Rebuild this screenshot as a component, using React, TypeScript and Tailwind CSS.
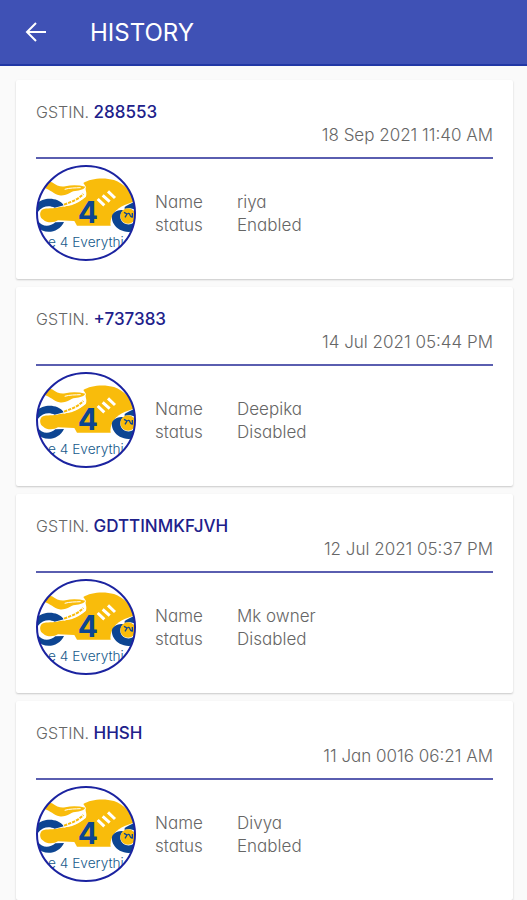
type Entry = { gstin: string; date: string; name: string; status: string };

const entries: Entry[] = [
  { gstin: '288553', date: '18 Sep 2021 11:40 AM', name: 'riya', status: 'Enabled' },
  { gstin: '+737383', date: '14 Jul 2021 05:44 PM', name: 'Deepika', status: 'Disabled' },
  { gstin: 'GDTTINMKFJVH', date: '12 Jul 2021 05:37 PM', name: 'Mk owner', status: 'Disabled' },
  { gstin: 'HHSH', date: '11 Jan 0016 06:21 AM', name: 'Divya', status: 'Enabled' },
];

function BikeLogo({ id }: { id: string }) {
  return (
    <svg className="h-24 w-[100px] shrink-0" viewBox="30 30 300 288" role="img" aria-label="Bike 4 Everything">
      <defs>
        <clipPath id={id}>
          <ellipse cx="180" cy="174" rx="147" ry="141" />
        </clipPath>
      </defs>
      <ellipse cx="180" cy="174" rx="147" ry="141" fill="#fff" />
      <g clipPath={`url(#${id})`}>
        {/* rear wheel */}
        <path d="M30 150 C44 128 92 122 114 151 L86 158 C70 150 50 152 36 170 Z" fill="#0d4592" />
        <path d="M36 198 C48 216 72 216 88 202 L114 201 C98 236 48 242 30 208 Z" fill="#0d4592" />
        {/* seat */}
        <path d="M60 78 L78 82 C92 92 104 97 118 94 C138 89 158 90 178 95 C172 106 156 106 142 109 C130 114 118 124 100 121 C84 117 74 104 52 98 Z" fill="#f9bc0b" />
        <path d="M116 103 C132 98 148 99 164 98" stroke="#fff" strokeWidth="3" fill="none" />
        {/* tank and body */}
        <path d="M172 84 C192 70 234 66 264 75 C294 86 316 108 327 140 L327 212 L153 212 L145 198 L96 196 C84 204 62 204 52 194 C40 188 40 170 48 164 C62 158 84 162 98 157 L136 151 C152 146 164 138 180 124 C184 112 176 104 180 96 Z" fill="#f9bc0b" />
        <path d="M112 149 C132 144 155 138 176 120" stroke="#fff" strokeWidth="13" fill="none" />
        <path d="M114 149 C135 141 154 135 172 117" stroke="#f9bc0b" strokeWidth="6" strokeDasharray="10 3" fill="none" />
        {/* tank vents */}
        <path d="M215 132 L235 151 M230 121 L251 140 M246 109 L267 129" stroke="#fff" strokeWidth="9" />
        {/* front wheel */}
        <path d="M254 212 C250 186 268 162 296 150 L330 138 L330 240 L258 222 Z" fill="#fff" />
        <path d="M296 156 C306 150 314 145 327 141 L330 166 C320 160 308 158 296 162 Z" fill="#0d4592" />
        <path d="M258 182 C262 172 278 162 292 166 C280 176 280 194 292 203 C304 212 318 208 330 200 L330 226 C304 238 274 226 264 208 C258 198 257 190 258 182 Z" fill="#0d4592" />
        <circle cx="306" cy="183" r="23" fill="#f9bc0b" />
        <path d="M294 172 L303 177 L297 187 M305 176 C315 172 309 188 319 186 L319 174" stroke="#0d4592" strokeWidth="4" fill="none" />
        <text x="155" y="205" fontSize="90" fontWeight="700" fill="#0d4592">4</text>
        <text x="66" y="277" fontSize="41" fontWeight="300" fill="#165a8c">e 4 Everythi</text>
      </g>
      <ellipse cx="180" cy="174" rx="147" ry="141" fill="none" stroke="#1b23a0" strokeWidth="6" />
    </svg>
  );
}

function HistoryCard({ entry, id }: { entry: Entry; id: string }) {
  return (
    <article className="rounded-xs bg-white px-5 pt-5 pb-[18px] shadow-[0_1px_2px_rgba(0,0,0,0.2)]">
      <h2 className="text-base leading-6">
        GSTIN. <span className="text-[17px] font-medium text-[#20208a]">{entry.gstin}</span>
      </h2>
      <p className="text-right leading-[23px]">{entry.date}</p>
      <hr className="mt-2.5 mb-1.5 border-0 border-t-2 border-[#5a5eb0]" />
      <div className="flex items-center gap-[19px]">
        <BikeLogo id={id} />
        <dl className="grid grid-cols-[82px_1fr] pt-0.5 leading-[23px]">
          <dt>Name</dt>
          <dd>{entry.name}</dd>
          <dt>status</dt>
          <dd>{entry.status}</dd>
        </dl>
      </div>
    </article>
  );
}

export default function App() {
  return (
    <div className="min-h-screen bg-[#fafafa] font-['Inter','Liberation_Sans',sans-serif] text-[17px] font-light text-[#666666] [font-feature-settings:'cv11']">
      <header className="flex h-[66px] items-center gap-[38px] border-b-2 border-[#2137a5] bg-[#3f51b5] px-5 text-white">
        <button type="button" aria-label="Back" className="flex size-8 items-center justify-center">
          <svg className="size-6" viewBox="0 0 24 24" fill="none" stroke="currentColor" strokeWidth="2">
            <path d="M22 12H3M12 3L3 12l9 9" />
          </svg>
        </button>
        <h1 className="pt-0.5 text-2xl font-normal">HISTORY</h1>
      </header>
      <main className="flex flex-col gap-2 pt-3.5 pr-3.5 pl-4">
        {entries.map((entry, index) => (
          <HistoryCard key={entry.gstin} entry={entry} id={`bike-clip-${index}`} />
        ))}
      </main>
    </div>
  );
}
